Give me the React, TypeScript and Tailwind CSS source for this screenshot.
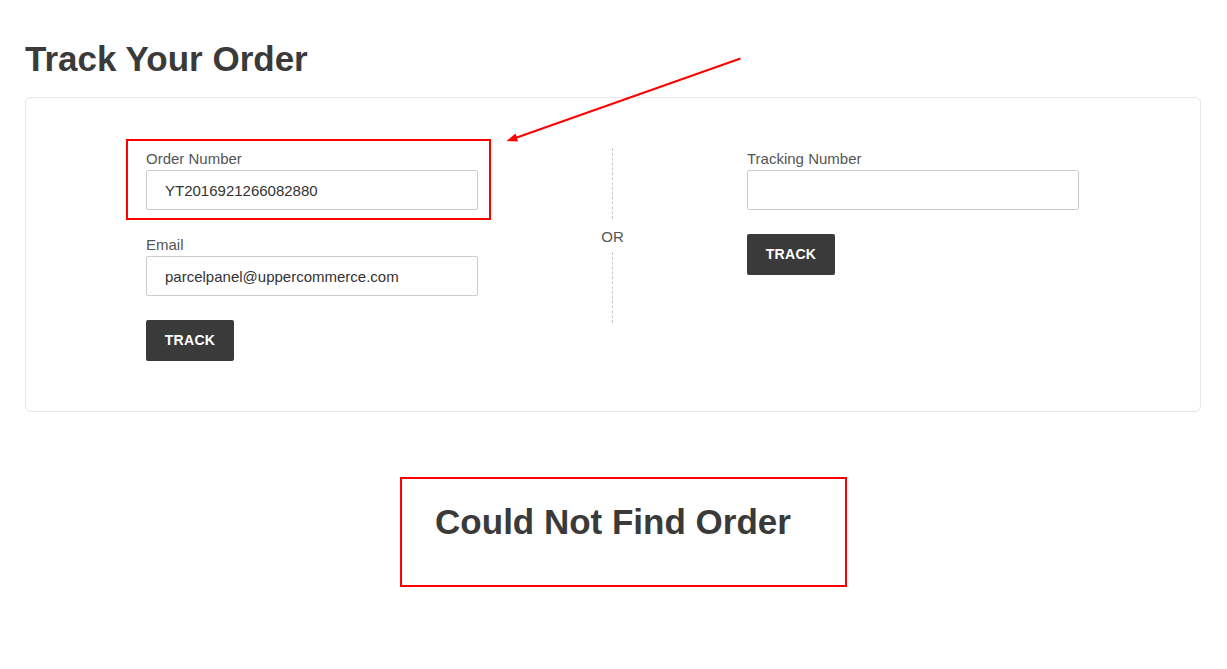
import React from "react";

const font = { fontFamily: '"Liberation Sans", Arial, Helvetica, sans-serif' };

function Field({ label, value }: { label: string; value?: string }) {
  return (
    <div className="flex flex-col">
      <label className="text-[15px] leading-[20px] text-[#555555]">{label}</label>
      <input
        className="mt-[1px] h-[40px] w-[332px] rounded-[2px] border border-[#cccccc] bg-white px-[18px] text-[15px] text-[#333333] outline-none"
        defaultValue={value}
        readOnly
      />
    </div>
  );
}

function TrackButton() {
  return (
    <button className="h-[41px] w-[88px] rounded-[2px] bg-[#3a3a3a] text-[14px] font-bold tracking-[0.3px] text-white">
      TRACK
    </button>
  );
}

export default function App() {
  return (
    <div className="relative min-h-[669px] w-full bg-white pl-[25px] pr-[26px] pt-[39px]" style={font}>
      <h1 className="text-[35px] font-bold leading-[40px] text-[#3a3a3a]">Track Your Order</h1>

      <div className="mt-[18px] flex justify-between rounded-[6px] border border-[#e6e6e6] pb-[50px] pl-[120px] pr-[121px] pt-[51px]">
        {/* order number + email */}
        <div className="flex w-[332px] flex-col gap-[24px]">
          <div className="relative">
            <Field label="Order Number" value="YT2016921266082880" />
            <div className="pointer-events-none absolute -bottom-[10px] -left-[20px] -right-[13px] -top-[10px] border-2 border-[#ff0000]" />
          </div>
          <div className="mt-[1px]">
            <Field label="Email" value="parcelpanel@uppercommerce.com" />
          </div>
          <div>
            <TrackButton />
          </div>
        </div>

        {/* divider */}
        <div className="-mt-[1px] flex h-[175px] flex-col items-center">
          <div className="w-0 flex-1 border-l border-dashed border-[#c8c8c8]" />
          <span className="pb-[6px] pt-[9px] text-[15px] leading-[18px] text-[#555555]">OR</span>
          <div className="w-0 flex-1 border-l border-dashed border-[#c8c8c8]" />
        </div>

        {/* tracking number */}
        <div className="flex w-[332px] flex-col gap-[24px]">
          <Field label="Tracking Number" />
          <div>
            <TrackButton />
          </div>
        </div>
      </div>

      <div className="mt-[90px] flex justify-center">
        <div className="relative">
          <h2 className="text-[35px] font-bold leading-[40px] text-[#3a3a3a]">Could Not Find Order</h2>
          <div className="pointer-events-none absolute -bottom-[45px] -left-[35px] -right-[56px] -top-[25px] border-2 border-[#ff0000]" />
        </div>
      </div>

      {/* annotation arrow */}
      <svg className="pointer-events-none absolute left-0 top-0" width="1227" height="669">
        <line x1="740.5" y1="58.5" x2="514" y2="138.5" stroke="#ff0000" strokeWidth="2" />
        <polygon points="506.5,141 515.5,133.5 518,141.5" fill="#ff0000" />
      </svg>
    </div>
  );
}
